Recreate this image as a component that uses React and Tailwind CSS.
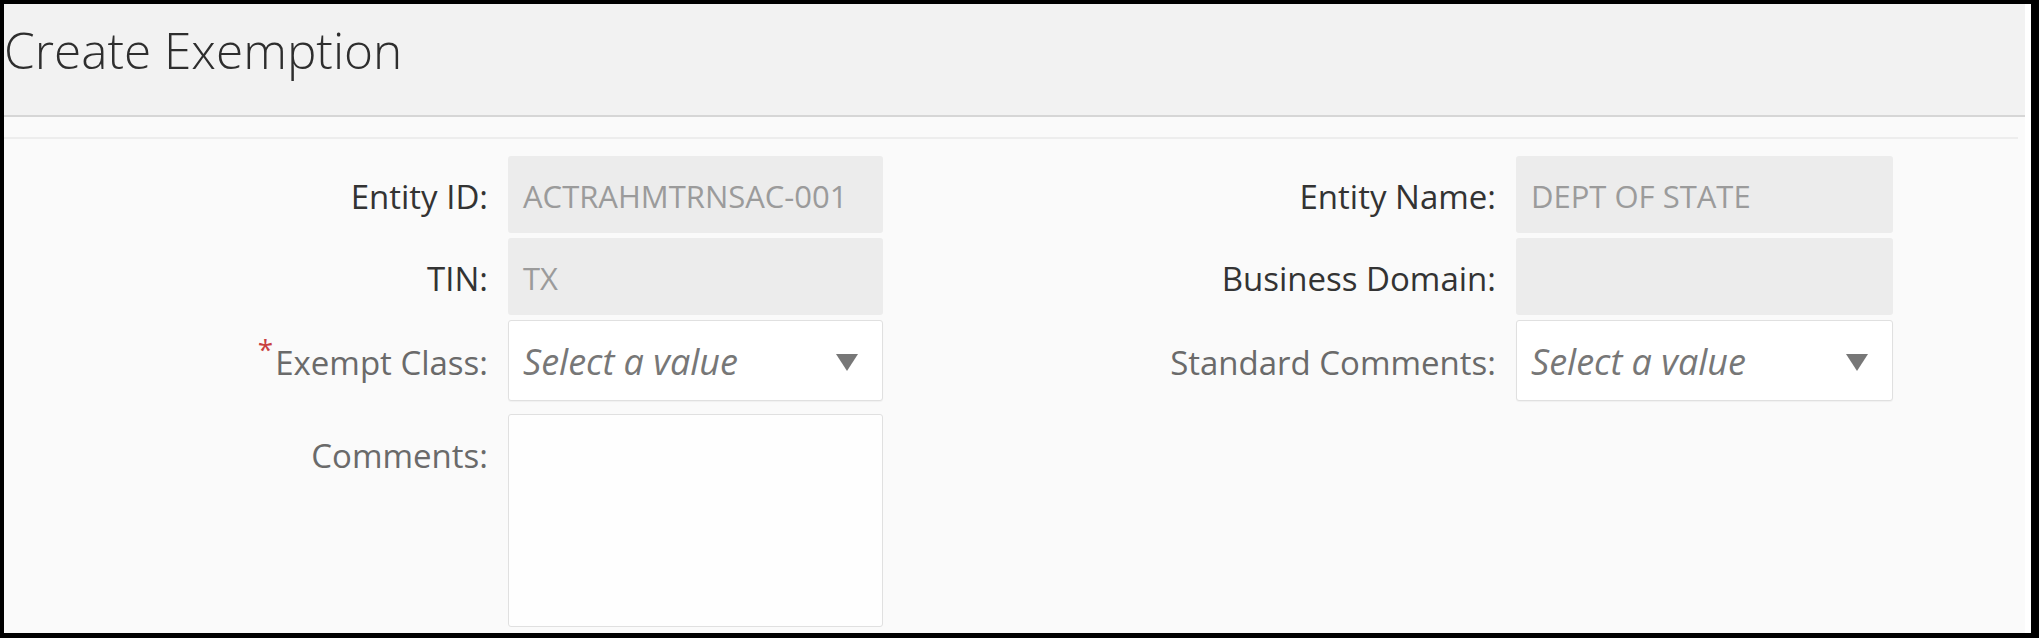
import React from 'react';

const Label = ({ children, dark, required, className = '' }) => (
  <div
    className={`flex items-center justify-end pt-[4px] text-[33px] whitespace-nowrap ${
      dark ? 'text-[#333333]' : 'text-[#6a6a6a]'
    } ${className}`}
  >
    {required && (
      <span className="self-start mt-[11px] mr-[2px] text-[28px] leading-none text-[#c9403f]">*</span>
    )}
    <span>{children}</span>
  </div>
);

const ReadOnlyBox = ({ value }) => (
  <div className="h-[77px] bg-[#ececec] rounded-[3px] px-[15px] pt-[4px] flex items-center overflow-hidden whitespace-nowrap text-[31px] text-[#9b9b9b]">
    {value}
  </div>
);

const SelectBox = () => (
  <div className="h-[81px] bg-white border border-[#e0e0e0] rounded-[3px] shadow-[0_1px_1px_rgba(0,0,0,0.04)] pl-[14px] pr-[24px] pt-[3px] flex items-center justify-between">
    <span className="italic text-[36px] text-[#777777]">Select a value</span>
    <svg width="22" height="17" viewBox="0 0 22 17">
      <path d="M0 0 L22 0 L11 17 Z" fill="#777777" />
    </svg>
  </div>
);

export default function App() {
  return (
    <div className="h-[638px] w-[2039px] overflow-hidden bg-black pt-[4px] pl-[4px] pr-[8px] pb-[5px] font-['Open_Sans',sans-serif]">
      <div className="h-full bg-white pr-[6px] flex flex-col">
        {/* Header */}
        <div className="h-[113px] shrink-0 bg-[#f2f2f2] border-b-2 border-[#d6d6d6] pt-[13px]">
          <h1 className="text-[49.5px] leading-[66px] font-light text-[#2e2e2e]">Create Exemption</h1>
        </div>

        {/* Body */}
        <div className="flex-1 bg-[#fafafa] pt-[20px] overflow-hidden">
          <div className="mr-[7px] h-[2px] bg-[#ededed]" />

          <div className="mt-[17px] grid grid-cols-[484px_375px_593px_377px] gap-x-[20px] gap-y-[5px] items-start">
            <Label dark className="h-[77px]">Entity ID:</Label>
            <ReadOnlyBox value="ACTRAHMTRNSAC-001" />
            <Label dark className="h-[77px]">Entity Name:</Label>
            <ReadOnlyBox value="DEPT OF STATE" />

            <Label dark className="h-[77px]">TIN:</Label>
            <ReadOnlyBox value="TX" />
            <Label dark className="h-[77px]">Business Domain:</Label>
            <ReadOnlyBox value="" />

            <Label required className="h-[81px]">Exempt Class:</Label>
            <SelectBox />
            <Label className="h-[81px]">Standard Comments:</Label>
            <SelectBox />

            <Label className="h-[80px] mt-[8px]">Comments:</Label>
            <div className="mt-[8px] h-[213px] bg-[#fefefe] border border-[#e0e0e0] rounded-[3px]" />
            <div />
            <div />
          </div>
        </div>
      </div>
    </div>
  );
}
